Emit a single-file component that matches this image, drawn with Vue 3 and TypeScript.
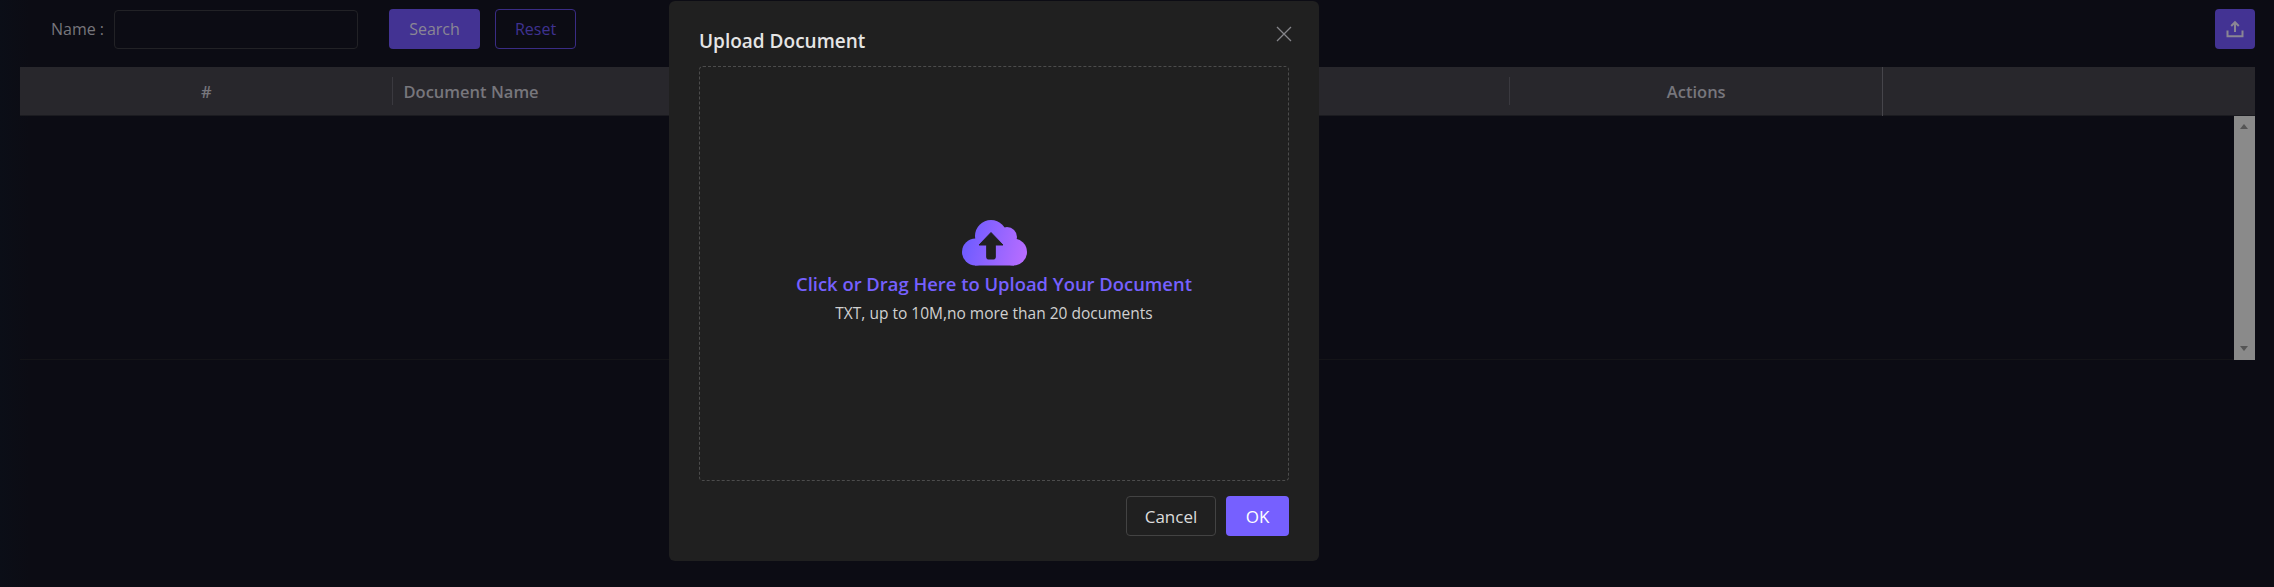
<script setup lang="ts">
const columns = ['#', 'Document Name', '', '', 'Actions', '']
</script>

<template>
  <div class="page">
    <div class="toolbar">
      <div class="search-form">
        <label class="field-label">Name<span class="colon">:</span></label>
        <input class="field-input" type="text" />
        <button class="btn btn-search">Search</button>
        <button class="btn btn-reset">Reset</button>
      </div>
      <button class="btn btn-upload" aria-label="Upload">
        <svg width="18" height="18" viewBox="0 0 18 18" fill="none" stroke="#8a8694" stroke-width="2">
          <path d="M9 12V2.500M5.200 6 9 2.200 12.800 6" />
          <path d="M1.500 10.500v5.800h15v-5.800" />
        </svg>
      </button>
    </div>

    <div class="table">
      <div class="table-head">
        <div v-for="(col, i) in columns" :key="i" class="head-cell" :class="{ left: i === 1 }">
          {{ col }}
        </div>
      </div>
      <div class="table-body">
        <div class="table-rows"></div>
        <div class="scrollbar">
          <span class="arrow arrow-up"></span>
          <span class="arrow arrow-down"></span>
        </div>
      </div>
    </div>

    <div class="overlay">
      <div class="modal">
        <div class="modal-head">
          <h3 class="modal-title">Upload Document</h3>
          <svg class="close" width="16" height="16" viewBox="0 0 16 16" fill="none" stroke="#85858a" stroke-width="1.3">
            <path d="M1 1l14 14M15 1 1 15" />
          </svg>
        </div>
        <div class="dropzone">
          <svg class="cloud" width="65" height="46" viewBox="0 0 65 46">
            <defs>
              <linearGradient id="cloudFill" gradientUnits="userSpaceOnUse" x1="0" y1="18" x2="65" y2="34">
                <stop offset="0" stop-color="#6b5bff" />
                <stop offset="1" stop-color="#b86dff" />
              </linearGradient>
            </defs>
            <g fill="url(#cloudFill)">
              <circle cx="29" cy="16" r="16" />
              <circle cx="45" cy="17" r="10" />
              <circle cx="13.500" cy="32" r="13.500" />
              <circle cx="51.500" cy="32" r="13.500" />
              <rect x="13" y="20" width="39" height="25.500" />
            </g>
            <path
              d="M29 12.500 17 25h7.700v12.500a1.500 1.500 0 0 0 1.500 1.500h5.600a1.500 1.500 0 0 0 1.500-1.500V25H41Z"
              fill="#202020"
              stroke="#202020"
              stroke-width="1"
              stroke-linejoin="round"
            />
          </svg>
          <p class="drop-title">Click or Drag Here to Upload Your Document</p>
          <p class="drop-hint">TXT, up to 10M,no more than 20 documents</p>
        </div>
        <div class="modal-foot">
          <button class="btn btn-cancel">Cancel</button>
          <button class="btn btn-ok">OK</button>
        </div>
      </div>
    </div>
  </div>
</template>

<style>
body {
  background: #0c0c14;
}
</style>

<style scoped>
.page {
  position: relative;
  width: 2274px;
  height: 587px;
  box-sizing: border-box;
  padding: 9px 19px 0 20px;
  overflow: hidden;
  background: linear-gradient(90deg, #0b0e17 0, #0c0c14 30px);
  font-family: "Open Sans", "Noto Sans", sans-serif;
  color: #77767c;
}

.toolbar {
  display: flex;
  justify-content: space-between;
  height: 40px;
}

.search-form {
  display: flex;
  align-items: center;
  padding-left: 31px;
}

.field-label {
  width: 63px;
  font-size: 16px;
}

.colon {
  margin-left: 4px;
}

.field-input {
  width: 244px;
  height: 39px;
  box-sizing: border-box;
  background: #0c0c14;
  border: 1px solid #222226;
  border-radius: 4px;
  margin-right: 31px;
}

.btn {
  height: 40px;
  border-radius: 4px;
  box-sizing: border-box;
  font-family: inherit;
  font-size: 16px;
  border: 1px solid transparent;
  padding: 0;
}

.btn-search {
  width: 91px;
  background: #433393;
  color: #8a8694;
  margin-right: 15px;
}

.btn-reset {
  width: 81px;
  background: transparent;
  border-color: #3a2c85;
  color: #3f3290;
}

.btn-upload {
  width: 40px;
  background: #433393;
  display: flex;
  align-items: center;
  justify-content: center;
}

.table {
  margin-top: 18px;
}

.table-head {
  display: grid;
  grid-template-columns: repeat(6, 1fr);
  height: 49px;
  background: #28272c;
  border-bottom: 1px solid #1b1b20;
  box-sizing: border-box;
}

.head-cell {
  position: relative;
  display: flex;
  align-items: center;
  justify-content: center;
  font-size: 16.500px;
  font-weight: 600;
  color: #77767c;
}

.head-cell.left {
  justify-content: flex-start;
  padding-left: 11px;
}

.head-cell::after {
  content: '';
  position: absolute;
  right: 0;
  top: 10px;
  bottom: 10px;
  width: 1px;
  background: #3a393f;
}

.head-cell:nth-child(5)::after {
  top: 0;
  bottom: -1px;
  background: #46454b;
}

.head-cell:last-child::after {
  display: none;
}

.table-body {
  display: flex;
  height: 244px;
}

.table-rows {
  flex: 1;
  border-bottom: 1px solid #141418;
}

.scrollbar {
  position: relative;
  width: 21px;
  background: #8a8a8a;
}

.arrow {
  position: absolute;
  left: 6px;
  width: 0;
  height: 0;
  border-left: 4.500px solid transparent;
  border-right: 4.500px solid transparent;
}

.arrow-up {
  top: 8px;
  border-bottom: 5px solid #555;
}

.arrow-down {
  bottom: 9px;
  border-top: 5px solid #555;
}

.overlay {
  position: absolute;
  left: 669px;
  top: 1px;
}

.modal {
  width: 650px;
  height: 560px;
  box-sizing: border-box;
  background: #202020;
  border-radius: 6px;
  padding: 0 30px;
  display: flex;
  flex-direction: column;
}

.modal-head {
  display: flex;
  align-items: center;
  justify-content: space-between;
  height: 65px;
  padding-top: 6px;
  box-sizing: border-box;
}

.modal-title {
  margin: 9px 0 0;
  font-size: 19px;
  font-weight: 600;
  color: #e5e5e5;
}

.close {
  margin: -6px -3px 0 0;
}

.dropzone {
  height: 415px;
  box-sizing: border-box;
  border: 1px dashed #4c4c4c;
  border-radius: 4px;
  display: flex;
  flex-direction: column;
  align-items: center;
  padding-top: 153px;
}

.cloud {
  display: block;
}

.drop-title {
  margin: 5px 0 0;
  font-size: 18.400px;
  font-weight: 600;
  line-height: 25px;
  color: #7660ff;
}

.drop-hint {
  margin: 6px 0 0;
  font-size: 15.500px;
  line-height: 22px;
  color: #d0d0d0;
}

.modal-foot {
  display: flex;
  justify-content: flex-end;
  gap: 10px;
  margin-top: 15px;
}

.btn-cancel {
  width: 90px;
  background: #202020;
  border-color: #434343;
  color: #dcdcdc;
  font-size: 17px;
}

.btn-ok {
  width: 63px;
  background: #7660ff;
  color: #fff;
  font-size: 17px;
}
</style>
